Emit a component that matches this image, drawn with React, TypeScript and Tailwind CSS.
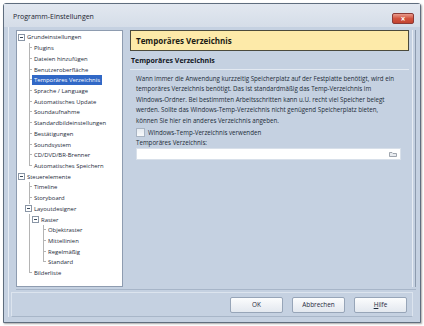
import React from 'react';

type Row = {
  label: string;
  level: number;
  box?: boolean;
  guides: ('pipe' | 'tee' | 'elbow' | 'blank')[];
  selected?: boolean;
};

const rows: Row[] = [
  { label: 'Grundeinstellungen', level: 0, box: true, guides: [] },
  { label: 'Plugins', level: 1, guides: ['blank', 'tee'] },
  { label: 'Dateien hinzufügen', level: 1, guides: ['blank', 'tee'] },
  { label: 'Benutzeroberfläche', level: 1, guides: ['blank', 'tee'] },
  { label: 'Temporäres Verzeichnis', level: 1, guides: ['blank', 'tee'], selected: true },
  { label: 'Sprache / Language', level: 1, guides: ['blank', 'tee'] },
  { label: 'Automatisches Update', level: 1, guides: ['blank', 'tee'] },
  { label: 'Soundaufnahme', level: 1, guides: ['blank', 'tee'] },
  { label: 'Standardbildeinstellungen', level: 1, guides: ['blank', 'tee'] },
  { label: 'Bestätigungen', level: 1, guides: ['blank', 'tee'] },
  { label: 'Soundsystem', level: 1, guides: ['blank', 'tee'] },
  { label: 'CD/DVD/BR-Brenner', level: 1, guides: ['blank', 'tee'] },
  { label: 'Automatisches Speichern', level: 1, guides: ['blank', 'elbow'] },
  { label: 'Steuerelemente', level: 0, box: true, guides: [] },
  { label: 'Timeline', level: 1, guides: ['blank', 'tee'] },
  { label: 'Storyboard', level: 1, guides: ['blank', 'tee'] },
  { label: 'Layoutdesigner', level: 1, box: true, guides: ['blank'] },
  { label: 'Raster', level: 2, box: true, guides: ['blank', 'pipe'] },
  { label: 'Objektraster', level: 3, guides: ['blank', 'pipe', 'blank', 'tee'] },
  { label: 'Mittellinien', level: 3, guides: ['blank', 'pipe', 'blank', 'tee'] },
  { label: 'Regelmäßig', level: 3, guides: ['blank', 'pipe', 'blank', 'tee'] },
  { label: 'Standard', level: 3, guides: ['blank', 'pipe', 'blank', 'elbow'] },
  { label: 'Bilderliste', level: 1, guides: ['blank', 'elbow'] },
];

const Guide = ({ kind }: { kind: 'pipe' | 'tee' | 'elbow' | 'blank' }) => {
  if (kind === 'blank') return <div className="w-[7px] shrink-0" />;
  return (
    <div className="w-[7px] shrink-0 flex flex-col self-stretch">
      <div className="flex flex-1">
        <div className="w-[4px]" />
        <div className={`w-[3px] border-l border-[#b4b4b4] ${kind === 'pipe' ? '' : 'border-b'}`} />
      </div>
      <div className="flex flex-1">
        <div className="w-[4px]" />
        <div className={`w-[3px] ${kind === 'elbow' ? '' : 'border-l border-[#b4b4b4]'}`} />
      </div>
    </div>
  );
};

const Box = () => (
  <div className="w-[7px] shrink-0 flex items-center justify-end">
    <div className="w-[7px] h-[7px] border border-[#8a96a6] bg-white flex items-center justify-center">
      <div className="w-[3px] h-px bg-[#3b4a5c]" />
    </div>
  </div>
);

const TreeRow = ({ row }: { row: Row }) => (
  <div className="flex h-[10.73px] items-stretch">
    {row.guides.map((g, i) => (
      <Guide key={i} kind={g} />
    ))}
    {row.box && <Box />}
    <div className="flex items-center">
      <span
        className={`px-[2px] leading-[10px] whitespace-nowrap ${
          row.selected ? 'bg-[#3168c6] text-white' : 'text-[#1e2a3a]'
        }`}
      >
        {row.label}
      </span>
    </div>
  </div>
);

const Button = ({ children }: { children: React.ReactNode }) => (
  <button className="w-[53px] h-[16px] rounded-[2px] border border-[#97a5b8] bg-gradient-to-b from-[#fbfcfd] to-[#e3e8ef] text-[#1e2a3a] flex items-center justify-center">
    {children}
  </button>
);

export default function App() {
  return (
    <div
      className="w-[424px] h-[326px] bg-white pt-[3px] pl-[3px] text-[6.4px]"
      style={{ fontFamily: '"Open Sans", "Liberation Sans", sans-serif' }}
    >
      <div className="w-[418px] h-[320px] flex flex-col border border-[#5f6d7e] rounded-t-[3px] bg-[#c5d1e1] shadow-[1px_1px_2px_rgba(0,0,0,0.35)]">
        {/* title bar */}
        <div className="h-[23px] flex items-center justify-between pl-[9px] pr-[6px] bg-gradient-to-b from-[#e2e8f0] to-[#d5dde8]">
          <span className="text-[7px] text-[#1b2430] pt-[4px]">Programm-Einstellungen</span>
          <div className="w-[22px] h-[11px] mt-[6px] rounded-[2px] border border-[#8b3a36] bg-gradient-to-b from-[#e89a8c] via-[#d2533f] to-[#c2432f] flex items-center justify-center text-white text-[8px] leading-none font-bold">
            ×
          </div>
        </div>

        {/* client */}
        <div className="flex-1 flex flex-col px-[4px] pb-[5px]">
          <div className="flex-1 flex flex-col border-l border-[#e6ecf4] pl-[7px] pt-[3px]">
            <div className="flex h-[257px]">
              {/* tree */}
              <div className="w-[107px] border border-[#8e9cb0] bg-white pt-px pl-px text-[5.9px]">
                {rows.map((r) => (
                  <TreeRow key={r.label} row={r} />
                ))}
              </div>

              {/* right panel */}
              <div className="flex-1 flex ml-[4px]">
                <div className="flex-1 flex flex-col pl-[3px] pr-[3px]">
                  <div className="h-[21px] border border-[#4b4a3c] bg-[#fdeaa9] flex items-center pl-[5px] text-[8px] font-bold text-[#1b1b14]">
                    Temporäres Verzeichnis
                  </div>
                  <div className="mt-[5px] pl-[1px] pb-[2px] border-b border-[#e3e9f1] text-[7px] font-bold text-[#10151c]">
                    Temporäres Verzeichnis
                  </div>
                  <div className="pl-[6px] pr-[8px] pt-[4px] text-[#222c38] text-[6.2px]">
                    <p className="leading-[10.5px] whitespace-nowrap">
                      Wann immer die Anwendung kurzzeitig Speicherplatz auf der Festplatte benötigt, wird ein
                      <br />
                      temporäres Verzeichnis benötigt. Das ist standardmäßig das Temp-Verzeichnis im
                      <br />
                      Windows-Ordner. Bei bestimmten Arbeitsschritten kann u.U. recht viel Speicher belegt
                      <br />
                      werden. Sollte das Windows-Temp-Verzeichnis nicht genügend Speicherplatz bieten,
                      <br />
                      können Sie hier ein anderes Verzeichnis angeben.
                    </p>
                    <div className="flex items-center gap-[3px] mt-[2px]">
                      <div className="w-[9px] h-[9px] border border-[#a9b4c3] bg-gradient-to-b from-[#e6ebf1] to-[#f7f9fb]" />
                      <span>Windows-Temp-Verzeichnis verwenden</span>
                    </div>
                    <div className="mt-[1px]">Temporäres Verzeichnis:</div>
                    <div className="h-[12px] bg-white border border-[#d8e0ea] flex items-center justify-end pr-[3px]">
                      <svg width="8" height="6" viewBox="0 0 8 6">
                        <path d="M0.5 1.5h2.5l1 1h3.5v3h-7z" fill="#e8ebef" stroke="#8a929c" strokeWidth="0.8" />
                      </svg>
                    </div>
                  </div>
                </div>
                <div className="w-[4px] border-l border-[#e8edf4] border-r border-r-[#8d9bae]" />
              </div>
            </div>

            {/* bottom bar */}
            <div className="mt-[2px] h-px bg-[#a7b5c8]" />
            <div className="flex-1 ml-[-5px] mr-[3px] mt-[2px] border border-[#dce4ee] border-b-[#a8b6c8] flex items-center justify-end gap-[9px] pr-[5px]">
              <Button>OK</Button>
              <Button>Abbrechen</Button>
              <Button>
                <span>
                  <span className="underline">H</span>ilfe
                </span>
              </Button>
            </div>
          </div>
        </div>
      </div>
    </div>
  );
}
